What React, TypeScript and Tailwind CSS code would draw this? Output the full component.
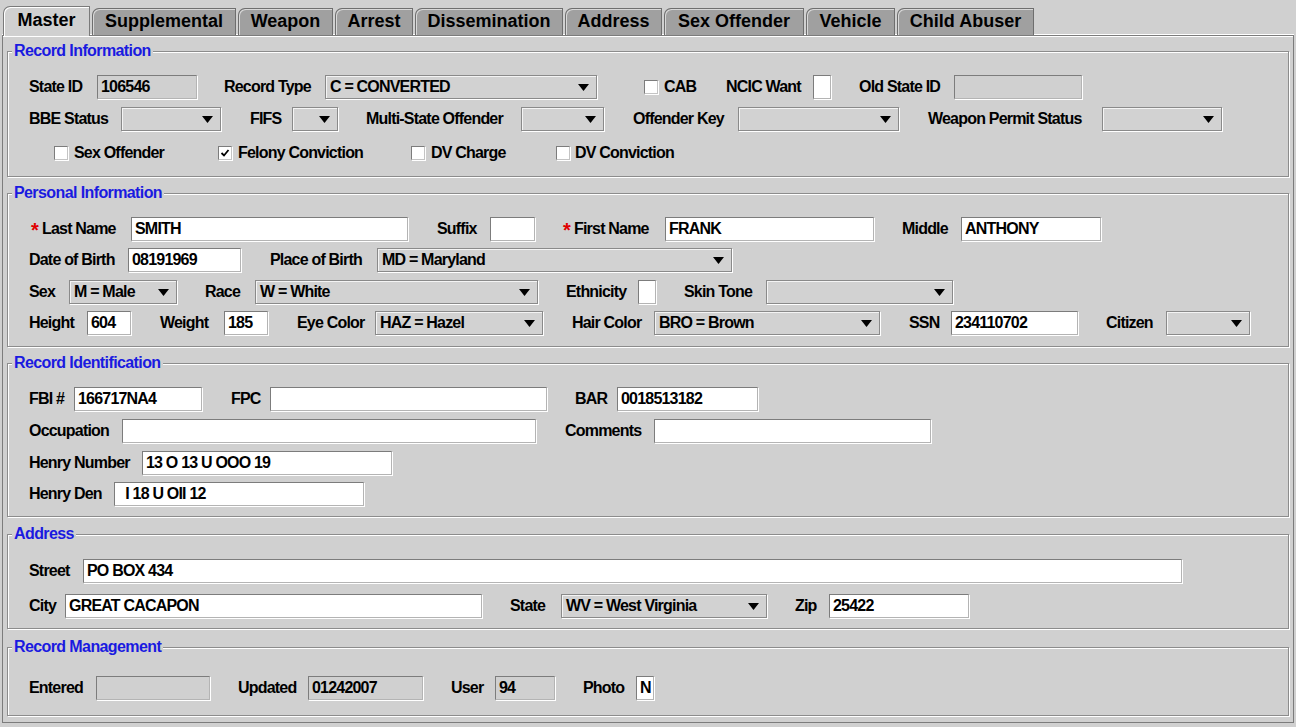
import React from 'react';

const tabs = [
  { name: 'Master', w: 'w-[87px]' },
  { name: 'Supplemental', w: 'w-[144px]' },
  { name: 'Weapon', w: 'w-[95px]' },
  { name: 'Arrest', w: 'w-[78px]' },
  { name: 'Dissemination', w: 'w-[148px]' },
  { name: 'Address', w: 'w-[97px]' },
  { name: 'Sex Offender', w: 'w-[140px]' },
  { name: 'Vehicle', w: 'w-[89px]' },
  { name: 'Child Abuser', w: 'w-[137px]' },
];

const text = 'shrink-0 whitespace-nowrap font-bold text-[16px] tracking-[-0.8px] text-black leading-none';

function L({ className = '', children }: { className?: string; children: React.ReactNode }) {
  return <span className={`${text} ${className}`}>{children}</span>;
}

function Req({ className = '', children }: { className?: string; children: React.ReactNode }) {
  return (
    <span className={`flex items-center shrink-0 ${className}`}>
      <span className="w-[11px] text-[#e00000] font-bold text-[20px] leading-none mt-[2px]">*</span>
      <span className={text}>{children}</span>
    </span>
  );
}

function Field({ className = '', value = '', disabled = false }: { className?: string; value?: string; disabled?: boolean }) {
  return (
    <div
      className={`shrink-0 h-[24px] flex items-center pl-[3px] overflow-hidden border border-t-[#7c7c7c] border-l-[#7c7c7c] border-b-[#b4b4b4] border-r-[#b4b4b4] shadow-[1px_1px_0_#ffffff] ${disabled ? 'bg-[#d0d0d0]' : 'bg-white'} ${className}`}
    >
      <span className={`${text} whitespace-pre`}>{value}</span>
    </div>
  );
}

function Combo({ className = '', value = '' }: { className?: string; value?: string }) {
  return (
    <div
      className={`shrink-0 h-[24px] flex items-center justify-between pl-[4px] pr-[7px] bg-[#d2d2d2] border border-[#8a8a8a] shadow-[inset_1px_1px_0_#f4f4f4,1px_1px_0_#ffffff] ${className}`}
    >
      <span className={text}>{value}</span>
      <svg width="11" height="7" viewBox="0 0 11 7" className="shrink-0">
        <path d="M0 0 H11 L5.5 7 Z" fill="#000" />
      </svg>
    </div>
  );
}

function Check({ className = '', checked = false }: { className?: string; checked?: boolean }) {
  return (
    <span
      className={`shrink-0 w-[14px] h-[14px] bg-white border border-t-[#7c7c7c] border-l-[#7c7c7c] border-b-[#c4c4c4] border-r-[#c4c4c4] shadow-[1px_1px_0_#ffffff] flex items-center justify-center ${className}`}
    >
      {checked && (
        <svg width="10" height="10" viewBox="0 0 10 10">
          <path d="M1.5 5 L4 7.5 L8.5 2" stroke="#000" strokeWidth="1.8" fill="none" />
        </svg>
      )}
    </span>
  );
}

function Section({ title, className = '', children }: { title: string; className?: string; children: React.ReactNode }) {
  return (
    <fieldset className={`border border-[#8c8c8c] shadow-[inset_1px_1px_0_#ffffff,1px_1px_0_#ffffff] ${className}`}>
      <legend className="ml-[4px] px-[2px] bg-[#d0d0d0] font-bold text-[16px] tracking-[-0.6px] leading-[16px] text-[#1a1ae0]">
        {title}
      </legend>
      {children}
    </fieldset>
  );
}

function Row({ className = '', children }: { className?: string; children: React.ReactNode }) {
  return <div className={`flex items-center h-[24px] pl-[21px] ${className}`}>{children}</div>;
}

export default function App() {
  return (
    <div className="w-[1296px] h-[727px] overflow-hidden bg-[#d0d0d0] font-['Liberation_Sans','Arial',sans-serif] text-black">
      {/* Tab strip */}
      <div className="h-[35px] flex items-end gap-[2px] pl-[3px]">
        {tabs.map((t, i) =>
          i === 0 ? (
            <div
              key={t.name}
              className={`${t.w} h-[30px] -mb-[1px] relative z-10 flex items-center justify-center pb-[2px] rounded-tl-[7px] bg-[#d0d0d0] border border-b-0 border-[#7a7a7a] shadow-[inset_1px_1px_0_#ffffff] text-[18px] font-bold`}
            >
              {t.name}
            </div>
          ) : (
            <div
              key={t.name}
              className={`${t.w} h-[27px] flex items-center justify-center pb-[1px] rounded-tl-[7px] bg-[#a0a0a0] border border-b-0 border-[#6e6e6e] shadow-[inset_1px_1px_0_#d8d8d8] text-[18px] font-bold`}
            >
              {t.name}
            </div>
          )
        )}
      </div>

      {/* Tab content */}
      <div className="ml-[2px] w-[1292px] h-[688px] border border-[#7c7c7c] shadow-[inset_0_1px_0_#ffffff,0_-1px_0_#ffffff] px-[4px] pt-[7px]">
        <Section title="Record Information" className="pb-[11px]">
          <Row className="mt-[16px]">
            <L className="w-[55px]">State ID</L>
            <Field className="ml-[13px] w-[100px]" value="106546" disabled />
            <L className="ml-[27px] w-[88px]">Record Type</L>
            <Combo className="ml-[13px] w-[272px]" value="C = CONVERTED" />
            <Check className="ml-[47px]" />
            <L className="ml-[6px] w-[30px]">CAB</L>
            <L className="ml-[32px] w-[75px]">NCIC Want</L>
            <Field className="ml-[12px] w-[18px]" />
            <L className="ml-[28px] w-[82px]">Old State ID</L>
            <Field className="ml-[13px] w-[128px]" disabled />
          </Row>
          <Row className="mt-[8px]">
            <L className="w-[78px]">BBE Status</L>
            <Combo className="ml-[14px] w-[100px]" />
            <L className="ml-[29px] w-[30px]">FIFS</L>
            <Combo className="ml-[12px] w-[46px]" />
            <L className="ml-[28px] w-[141px]">Multi-State Offender</L>
            <Combo className="ml-[14px] w-[83px]" />
            <L className="ml-[29px] w-[92px]">Offender Key</L>
            <Combo className="ml-[13px] w-[161px]" />
            <L className="ml-[29px] w-[159px]">Weapon Permit Status</L>
            <Combo className="ml-[15px] w-[120px]" />
          </Row>
          <Row className="mt-[10px]">
            <Check className="ml-[25px]" />
            <L className="ml-[6px] w-[92px]">Sex Offender</L>
            <Check className="ml-[52px]" checked />
            <L className="ml-[6px] w-[121px]">Felony Conviction</L>
            <Check className="ml-[52px]" />
            <L className="ml-[6px] w-[74px]">DV Charge</L>
            <Check className="ml-[51px]" />
            <L className="ml-[5px] w-[98px]">DV Conviction</L>
          </Row>
        </Section>

        <Section title="Personal Information" className="mt-[8px] pb-[11px]">
          <Row className="mt-[16px]">
            <Req className="ml-[2px] w-[87px]">Last Name</Req>
            <Field className="ml-[13px] w-[277px]" value="SMITH" />
            <L className="ml-[29px] w-[41px]">Suffix</L>
            <Field className="ml-[12px] w-[45px]" />
            <Req className="ml-[28px] w-[89px]">First Name</Req>
            <Field className="ml-[13px] w-[209px]" value="FRANK" />
            <L className="ml-[28px] w-[46px]">Middle</L>
            <Field className="ml-[13px] w-[140px]" value="ANTHONY" />
          </Row>
          <Row className="mt-[7px]">
            <L className="w-[87px]">Date of Birth</L>
            <Field className="ml-[12px] w-[113px]" value="08191969" />
            <L className="ml-[29px] w-[94px]">Place of Birth</L>
            <Combo className="ml-[13px] w-[355px]" value="MD = Maryland" />
          </Row>
          <Row className="mt-[8px]">
            <L className="w-[28px]">Sex</L>
            <Combo className="ml-[12px] w-[108px]" value="M = Male" />
            <L className="ml-[28px] w-[36px]">Race</L>
            <Combo className="ml-[14px] w-[283px]" value="W = White" />
            <L className="ml-[28px] w-[59px]">Ethnicity</L>
            <Field className="ml-[13px] w-[18px]" />
            <L className="ml-[28px] w-[69px]">Skin Tone</L>
            <Combo className="ml-[13px] w-[187px]" />
          </Row>
          <Row className="mt-[7px]">
            <L className="w-[45px]">Height</L>
            <Field className="ml-[13px] w-[44px]" value="604" />
            <L className="ml-[29px] w-[50px]">Weight</L>
            <Field className="ml-[14px] w-[44px]" value="185" />
            <L className="ml-[29px] w-[65px]">Eye Color</L>
            <Combo className="ml-[13px] w-[168px]" value="HAZ = Hazel" />
            <L className="ml-[29px] w-[69px]">Hair Color</L>
            <Combo className="ml-[13px] w-[226px]" value="BRO = Brown" />
            <L className="ml-[29px] w-[30px]">SSN</L>
            <Field className="ml-[12px] w-[127px]" value="234110702" />
            <L className="ml-[28px] w-[47px]">Citizen</L>
            <Combo className="ml-[13px] w-[84px]" />
          </Row>
        </Section>

        <Section title="Record Identification" className="mt-[8px] pb-[10px]">
          <Row className="mt-[16px]">
            <L className="w-[34px]">FBI #</L>
            <Field className="ml-[11px] w-[128px]" value="166717NA4" />
            <L className="ml-[29px] w-[26px]">FPC</L>
            <Field className="ml-[13px] w-[277px]" />
            <L className="ml-[28px] w-[31px]">BAR</L>
            <Field className="ml-[11px] w-[141px]" value="0018513182" />
          </Row>
          <Row className="mt-[8px]">
            <L className="w-[81px]">Occupation</L>
            <Field className="ml-[12px] w-[414px]" />
            <L className="ml-[29px] w-[76px]">Comments</L>
            <Field className="ml-[13px] w-[277px]" />
          </Row>
          <Row className="mt-[8px]">
            <L className="w-[101px]">Henry Number</L>
            <Field className="ml-[12px] w-[250px]" value="13 O 13 U OOO 19" />
          </Row>
          <Row className="mt-[7px]">
            <L className="w-[73px]">Henry Den</L>
            <Field className="ml-[12px] w-[250px]" value="  I 18 U OII 12" />
          </Row>
        </Section>

        <Section title="Address" className="mt-[9px] pb-[10px]">
          <Row className="mt-[17px]">
            <L className="w-[43px]">Street</L>
            <Field className="ml-[11px] w-[1099px]" value="PO BOX 434" />
          </Row>
          <Row className="mt-[11px]">
            <L className="w-[23px]">City</L>
            <Field className="ml-[13px] w-[417px]" value="GREAT CACAPON" />
            <L className="ml-[28px] w-[37px]">State</L>
            <Combo className="ml-[14px] w-[206px]" value="WV = West Virginia" />
            <L className="ml-[28px] w-[23px]">Zip</L>
            <Field className="ml-[11px] w-[140px]" value="25422" />
          </Row>
        </Section>

        <Section title="Record Management" className="mt-[10px] pb-[15px]">
          <Row className="mt-[21px]">
            <L className="w-[54px]">Entered</L>
            <Field className="ml-[13px] w-[114px]" disabled />
            <L className="ml-[28px] w-[58px]">Updated</L>
            <Field className="ml-[12px] w-[115px]" value="01242007" disabled />
            <L className="ml-[28px] w-[32px]">User</L>
            <Field className="ml-[12px] w-[60px]" value="94" disabled />
            <L className="ml-[28px] w-[41px]">Photo</L>
            <Field className="ml-[12px] w-[18px]" value="N" />
          </Row>
        </Section>
      </div>
    </div>
  );
}
